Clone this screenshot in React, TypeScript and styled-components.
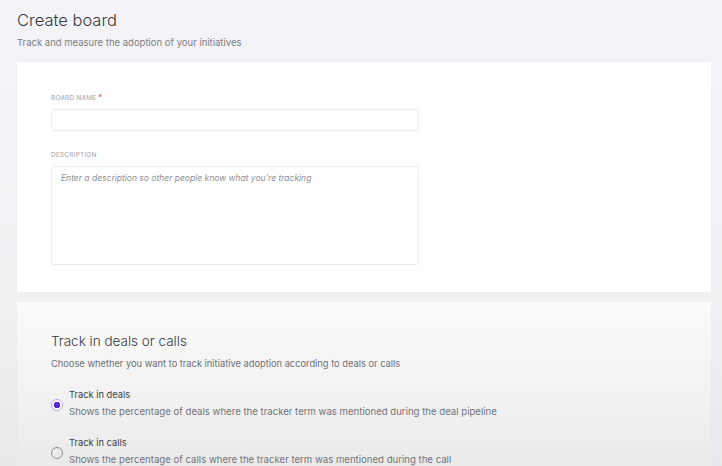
import React from "react";
import styled, { createGlobalStyle } from "styled-components";

const Global = createGlobalStyle`
  html, body { margin: 0; padding: 0; }
  body {
    background: linear-gradient(180deg, #f4f4f8 0%, #f1f1f4 60%, #e9e9ec 100%);
    font-family: Inter, "Noto Sans", "Liberation Sans", sans-serif;
    color: #333;
    width: 722px;
    height: 466px;
    overflow: hidden;
  }
`;

const Page = styled.div`
  display: flex;
  flex-direction: column;
  padding: 0 11px 0 17px;
`;

const Header = styled.header`
  display: flex;
  flex-direction: column;
  padding-top: 9px;
  height: 53px;
  box-sizing: border-box;
`;

const Title = styled.h1`
  margin: 0;
  font-size: 16.5px;
  font-weight: 300;
  color: #38383c;
  line-height: 22px;
`;

const Subtitle = styled.p`
  margin: 6px 0 0;
  font-size: 9.5px;
  color: #7c7c82;
  line-height: 12px;
`;

const Card = styled.section<{ $fade?: boolean }>`
  background: ${(p) =>
    p.$fade
      ? "linear-gradient(180deg, #fbfbfb 0%, #f3f3f3 40%, #e6e6e6 100%)"
      : "#ffffff"};
  box-shadow: 0 0 2px rgba(0, 0, 0, 0.03);
  box-sizing: border-box;
`;

const FormCard = styled(Card)`
  height: 230px;
  padding: 32px 34px 0;
  display: flex;
  flex-direction: column;
  margin-top: 9px;
`;

const Field = styled.div<{ $gap?: number }>`
  display: flex;
  flex-direction: column;
  margin-bottom: ${(p) => p.$gap ?? 0}px;
`;

const Label = styled.label`
  font-size: 6.5px;
  letter-spacing: 0.2px;
  color: #a2a2a8;
  text-transform: uppercase;
  line-height: 9px;
  margin-bottom: 6px;
  display: flex;
  gap: 2px;
`;

const Req = styled.span`
  color: #e05454;
  font-size: 8px;
  line-height: 7px;
`;

const Input = styled.div`
  width: 368px;
  height: 22px;
  border: 1px solid #ececef;
  border-radius: 3px;
  box-sizing: border-box;
  background: #fff;
`;

const TextArea = styled.div`
  width: 368px;
  height: 99px;
  border: 1px solid #ececef;
  border-radius: 3px;
  box-sizing: border-box;
  background: #fff;
  padding: 6px 9px;
  font-size: 8.5px;
  font-style: italic;
  color: #8f8f95;
`;

const TrackCard = styled(Card)`
  margin-top: 10px;
  height: 200px;
  padding: 30px 34px 0;
  display: flex;
  flex-direction: column;
`;

const SectionTitle = styled.h2`
  margin: 0;
  font-size: 13.5px;
  font-weight: 300;
  color: #38383c;
  line-height: 18px;
`;

const SectionSub = styled.p`
  margin: 8px 0 0;
  font-size: 9.3px;
  color: #6f6f74;
  line-height: 12px;
`;

const Options = styled.div`
  display: flex;
  flex-direction: column;
  gap: 19px;
  margin-top: 19px;
`;

const Option = styled.div`
  display: flex;
  align-items: center;
  gap: 6px;
`;

const Radio = styled.span<{ $checked?: boolean }>`
  width: 12px;
  height: 12px;
  border-radius: 50%;
  box-sizing: border-box;
  flex-shrink: 0;
  margin-top: 2px;
  border: ${(p) => (p.$checked ? "1.5px solid #b9a4ee" : "1px solid #8e8e94")};
  background: ${(p) =>
    p.$checked ? "radial-gradient(circle, #5b2bd6 0 3px, #ffffff 3.5px)" : "transparent"};
`;

const OptionText = styled.div`
  display: flex;
  flex-direction: column;
  gap: 5px;
`;

const OptionTitle = styled.span`
  font-size: 9.3px;
  color: #3e3e42;
  line-height: 12px;
`;

const OptionDesc = styled.span`
  font-size: 9.6px;
  color: #737378;
  line-height: 12px;
`;

export default function App() {
  return (
    <>
      <Global />
      <Page>
        <Header>
          <Title>Create board</Title>
          <Subtitle>Track and measure the adoption of your initiatives</Subtitle>
        </Header>
        <FormCard>
          <Field $gap={20}>
            <Label>
              Board name <Req>*</Req>
            </Label>
            <Input />
          </Field>
          <Field>
            <Label>Description</Label>
            <TextArea>Enter a description so other people know what you’re tracking</TextArea>
          </Field>
        </FormCard>
        <TrackCard $fade>
          <SectionTitle>Track in deals or calls</SectionTitle>
          <SectionSub>Choose whether you want to track initiative adoption according to deals or calls</SectionSub>
          <Options>
            <Option>
              <Radio $checked />
              <OptionText>
                <OptionTitle>Track in deals</OptionTitle>
                <OptionDesc>Shows the percentage of deals where the tracker term was mentioned during the deal pipeline</OptionDesc>
              </OptionText>
            </Option>
            <Option>
              <Radio />
              <OptionText>
                <OptionTitle>Track in calls</OptionTitle>
                <OptionDesc>Shows the percentage of calls where the tracker term was mentioned during the call</OptionDesc>
              </OptionText>
            </Option>
          </Options>
        </TrackCard>
      </Page>
    </>
  );
}
